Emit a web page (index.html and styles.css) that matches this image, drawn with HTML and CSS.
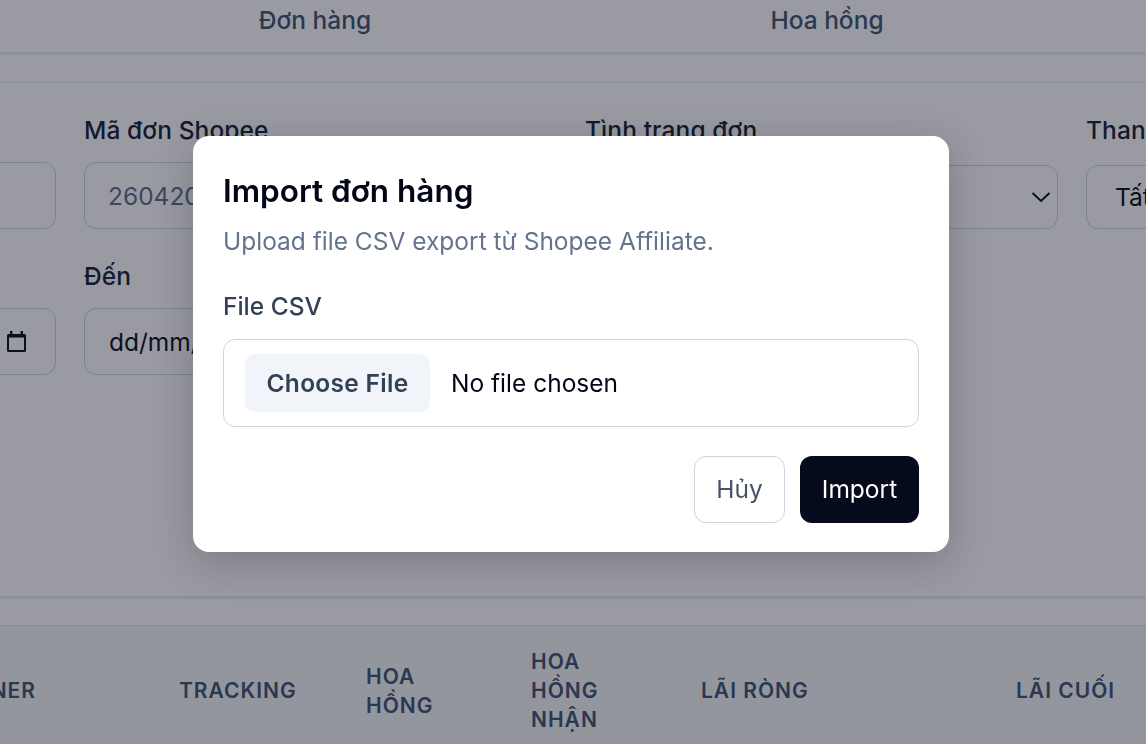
FILE: index.html
```html
<!DOCTYPE html>
<html lang="vi">
<head>
    <meta charset="UTF-8">
    <meta name="viewport" content="width=device-width, initial-scale=1.0">
    <title>Import đơn hàng</title>
    <link rel="stylesheet" href="styles.css">
</head>
<body>
    <div class="page">
        <nav class="tabs">
            <a class="tab">Đơn hàng</a>
            <a class="tab">Hoa hồng</a>
        </nav>

        <section class="filters">
            <div class="field">
                <div class="label">Mã đơn</div>
                <div class="control"></div>
            </div>
            <div class="field">
                <div class="label">Mã đơn Shopee</div>
                <div class="control placeholder">260420</div>
            </div>
            <div class="field">
                <div class="label">Tình trạng đơn</div>
                <div class="control select">
                    <span>Tất cả</span>
                    <svg class="chevron" viewBox="0 0 20 12"><path d="M1.5 2l8.5 8 8.5-8"/></svg>
                </div>
            </div>
            <div class="field">
                <div class="label">Thanh toán</div>
                <div class="control select"><span>Tất cả</span></div>
            </div>
            <div class="field">
                <div class="label">Từ</div>
                <div class="control date">
                    <span>dd/mm/yyyy</span>
                    <svg class="calendar" viewBox="0 0 19 21"><path fill-rule="evenodd" d="M3 0h2.4v3h8.2V0H16v3h1.5A1.5 1.5 0 0 1 19 4.500v15a1.500 1.500 0 0 1-1.500 1.500h-16A1.500 1.500 0 0 1 0 19.500v-15A1.500 1.500 0 0 1 1.500 3H3zM2 6.500V19h15V6.500z"/></svg>
                </div>
            </div>
            <div class="field">
                <div class="label">Đến</div>
                <div class="control date"><span>dd/mm/yyyy</span></div>
            </div>
        </section>

        <section class="table-card">
            <div class="table-head">
                <div>PARTNER</div>
                <div>TRACKING</div>
                <div class="two-lines">HOA<br>HỒNG</div>
                <div>HOA<br>HỒNG<br>NHẬN</div>
                <div>LÃI RÒNG</div>
                <div>LÃI CUỐI</div>
            </div>
        </section>
    </div>

    <div class="backdrop"></div>

    <div class="modal">
        <h2>Import đơn hàng</h2>
        <p class="subtitle">Upload file CSV export từ Shopee Affiliate.</p>
        <div class="file-label">File CSV</div>
        <div class="file-box">
            <span class="file-btn">Choose File</span>
            <span class="file-name">No file chosen</span>
        </div>
        <div class="actions">
            <button class="btn btn-cancel">Hủy</button>
            <button class="btn btn-primary">Import</button>
        </div>
    </div>
</body>
</html>
```

FILE: styles.css
```css
* {
    box-sizing: border-box;
}

html, body {
    height: 100%;
}

body {
    margin: 0;
    overflow: hidden;
    font-family: Inter, "Liberation Sans", sans-serif;
    font-size: 24.5px;
    background: #fff;
    color: #0f172a;
}

.page {
    height: 744px;
    overflow: hidden;
}

.tabs {
    display: flex;
    height: 53px;
    padding-left: 59px;
    background: #fff;
    border-bottom: 1px solid #e2e8f0;
    box-shadow: 0 1px 3px rgba(15, 23, 42, 0.15);
}

.tab {
    width: 512px;
    margin-top: 2px;
    text-align: center;
    line-height: 36px;
    font-weight: 500;
    color: #475a78;
}

.filters {
    display: grid;
    grid-template-columns: repeat(4, 473px);
    column-gap: 28px;
    row-gap: 30px;
    height: 515px;
    margin: 29px 0 0 -418px;
    padding-top: 30px;
    border: 1px solid #e2e8f0;
    border-right: none;
    align-content: start;
    box-shadow: 0 1px 3px rgba(15, 23, 42, 0.15);
}

.field {
    display: flex;
    flex-direction: column;
}

.field:nth-child(5) {
    grid-column: 1;
}

.label {
    height: 31px;
    margin-bottom: 18px;
    line-height: 34px;
    font-weight: 500;
    letter-spacing: 0.1px;
    color: #1e293b;
}

.control {
    display: flex;
    align-items: center;
    height: 67px;
    padding: 0 24px 0 23px;
    border: 1px solid #cbd5e1;
    border-radius: 12px;
    background: #fff;
}

.select {
    height: 64px;
    margin-top: auto;
    justify-content: space-between;
    padding: 0 28px;
}

.date {
    justify-content: space-between;
    padding: 0 29px 0 24px;
}

.placeholder {
    color: #64748b;
}

.chevron {
    width: 20px;
    height: 12px;
    margin-right: -22px;
    fill: none;
    stroke: #0f172a;
    stroke-width: 2;
}

.calendar {
    width: 19px;
    height: 21px;
    margin-top: -1px;
    fill: #0f172a;
}

.table-card {
    margin: 28px 0 0;
    border-top: 1px solid #e2e8f0;
    background: #f6f7f9;
    height: 128px;
}

.table-head {
    display: grid;
    grid-template-columns: 258px 187px 165px 170px 315px 130px;
    align-items: center;
    height: 128px;
    margin-left: -79px;
    font-size: 21px;
    line-height: 29px;
    font-weight: 600;
    letter-spacing: 1px;
    color: #475a78;
    white-space: nowrap;
}

.table-head > div:first-child {
    text-align: right;
    padding-right: 143px;
}

.table-head > .two-lines {
    margin-top: 1px;
}

.backdrop {
    position: fixed;
    inset: 0;
    background: rgba(2, 6, 23, 0.4);
}

.modal {
    position: absolute;
    left: 193px;
    top: 136px;
    width: 756px;
    height: 416px;
    padding: 30px 30px 0;
    background: #fff;
    border-radius: 16px;
    box-shadow: 0 10px 40px rgba(2, 6, 23, 0.22);
}

.modal h2 {
    margin: 0;
    font-size: 31.5px;
    line-height: 50px;
    font-weight: 600;
    color: #020617;
}

.subtitle {
    margin: 0;
    line-height: 50px;
    color: #64748b;
}

.file-label {
    margin-top: 22px;
    line-height: 36px;
    font-weight: 500;
    color: #334155;
}

.file-box {
    display: flex;
    align-items: center;
    gap: 21px;
    height: 88px;
    margin-top: 15px;
    padding-left: 21px;
    border: 1px solid #cbd5e1;
    border-radius: 12px;
}

.file-btn {
    display: flex;
    align-items: center;
    justify-content: center;
    width: 185px;
    height: 58px;
    background: #f1f5f9;
    border-radius: 10px;
    font-weight: 600;
    letter-spacing: 0.3px;
    color: #334155;
}

.file-name {
    color: #020617;
}

.actions {
    display: flex;
    justify-content: flex-end;
    gap: 15px;
    margin-top: 29px;
}

.btn {
    height: 67px;
    padding: 0 0 2px;
    border-radius: 12px;
    font-family: inherit;
    font-size: 24.5px;
    cursor: pointer;
}

.btn-cancel {
    width: 91px;
    background: #fff;
    border: 1px solid #cbd5e1;
    color: #475569;
}

.btn-primary {
    width: 119px;
    background: #050a1c;
    border: none;
    color: #fff;
}
```
